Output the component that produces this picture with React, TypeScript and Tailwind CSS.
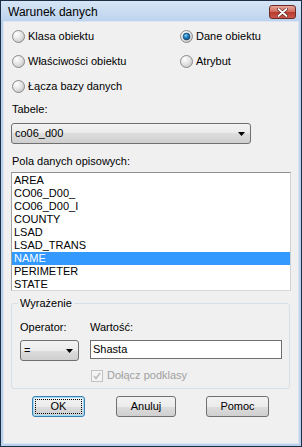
import React from 'react';

const btnFace = 'bg-[linear-gradient(#f3f3f3,#ebebeb_50%,#dddddd_50%,#cfcfcf)]';

const Radio = ({ checked }: { checked?: boolean }) => (
  <svg width="13" height="13" viewBox="0 0 13 13" className="shrink-0">
    <defs>
      <radialGradient id="radioFace" cx="35%" cy="30%" r="75%">
        <stop offset="0" stopColor="#ffffff" />
        <stop offset="0.6" stopColor="#e2e2e2" />
        <stop offset="1" stopColor="#c4c4c4" />
      </radialGradient>
      <radialGradient id="radioDot" cx="40%" cy="35%" r="70%">
        <stop offset="0" stopColor="#7fd0f6" />
        <stop offset="0.5" stopColor="#1e7ec0" />
        <stop offset="1" stopColor="#0d3f6e" />
      </radialGradient>
    </defs>
    <circle cx="6.5" cy="6.5" r="6" fill="url(#radioFace)" stroke="#8c8c8c" />
    {checked && <circle cx="6.5" cy="6.5" r="3.4" fill="url(#radioDot)" stroke="#1b4b78" strokeWidth="0.8" />}
  </svg>
);

const Arrow = () => (
  <svg width="7" height="4" viewBox="0 0 7 4">
    <path d="M0 0h7L3.5 4z" fill="#000" />
  </svg>
);

const RadioRow = ({ label, checked }: { label: string; checked?: boolean }) => (
  <div className="h-[25px] flex items-center gap-[3px]">
    <Radio checked={checked} />
    <span>{label}</span>
  </div>
);

const fields = ['AREA', 'CO06_D00_', 'CO06_D00_I', 'COUNTY', 'LSAD', 'LSAD_TRANS', 'NAME', 'PERIMETER', 'STATE'];

export default function App() {
  return (
    <div className="w-[302px] h-[447px] border border-[#1d2f47] bg-[#b9d1ec] flex flex-col text-[11px] leading-[13px] text-black font-['Liberation_Sans',Arial,sans-serif]">
      {/* Title bar */}
      <div className="h-[20px] flex items-center pl-[7px] pr-[5px] bg-gradient-to-b from-[#d6e5f6] to-[#bdd3ed]">
        <span className="text-[12px] leading-[14px] pt-[1px]">Warunek danych</span>
        <div className="ml-auto mt-[2px] w-[27px] h-[14px] rounded-[3px] border border-[#6b2a27] bg-[linear-gradient(#e8a89c,#d0675a_50%,#b8392d_50%,#c9574a)] flex items-center justify-center">
          <svg width="11" height="9" viewBox="0 0 11 9">
            <path d="M1.5 1l8 7M9.5 1l-8 7" stroke="#5a2420" strokeWidth="3.2" strokeLinecap="round" />
            <path d="M1.5 1l8 7M9.5 1l-8 7" stroke="#ffffff" strokeWidth="1.8" strokeLinecap="round" />
          </svg>
        </div>
      </div>

      {/* Client area */}
      <div className="mx-[2px] h-[423px] border border-[#dbe6f2] bg-[#f0f0f0] flex flex-col pt-[2px]">
        <div className="flex">
          <div className="w-[176px] pl-[8px]">
            <RadioRow label="Klasa obiektu" />
            <RadioRow label="Właściwości obiektu" />
            <RadioRow label="Łącza bazy danych" />
          </div>
          <div>
            <RadioRow label="Dane obiektu" checked />
            <RadioRow label="Atrybut" />
          </div>
        </div>

        <div className="pl-[8px] mt-[4px]">Tabele:</div>
        <div className={`ml-[7px] mt-[7px] w-[240px] h-[21px] rounded-[3px] border border-[#707070] ${btnFace} flex items-center pl-[3px] pr-[5px]`}>
          <span>co06_d00</span>
          <span className="ml-auto flex"><Arrow /></span>
        </div>

        <div className="pl-[8px] mt-[11px]">Pola danych opisowych:</div>
        <div className="ml-[7px] mt-[4px] w-[280px] h-[119px] bg-white border border-t-[#8e8f8f] border-l-[#a3a3a3] border-r-[#cdd1d6] border-b-[#d5d9de] pt-[1px]">
          {fields.map((f) => (
            <div key={f} className={`h-[13px] pl-[2px] ${f === 'NAME' ? 'bg-[#3399ff] text-white' : ''}`}>
              {f}
            </div>
          ))}
        </div>

        {/* Group box */}
        <div className="relative ml-[7px] mt-[12px] w-[279px] h-[86px] border border-[#d5dfe5] rounded-[3px] pt-[17px] pl-[8px]">
          <span className="absolute left-[6px] top-[-7px] px-[2px] bg-[#f0f0f0]">Wyrażenie</span>
          <div className="flex">
            <div className="w-[70px]">
              <div>Operator:</div>
              <div className={`mt-[6px] w-[59px] h-[21px] rounded-[3px] border border-[#707070] ${btnFace} flex items-center pl-[3px] pr-[5px]`}>
                <span>=</span>
                <span className="ml-auto flex"><Arrow /></span>
              </div>
            </div>
            <div>
              <div>Wartość:</div>
              <div className="mt-[6px] w-[192px] h-[19px] bg-white border border-[#6f6f6f] flex items-center pl-[2px]">
                Shasta
              </div>
              <div className="mt-[10px] flex items-center gap-[4px]">
                <div className="w-[12px] h-[12px] border border-[#c2c2c2] bg-[#f4f4f4] flex items-center justify-center ml-[1px]">
                  <svg width="8" height="8" viewBox="0 0 8 8">
                    <path d="M1 4l2 2.5L7 1" stroke="#b8b8b8" strokeWidth="1.4" fill="none" />
                  </svg>
                </div>
                <span className="text-[#a0a0a0]">Dołącz podklasy</span>
              </div>
            </div>
          </div>
        </div>

        {/* Buttons */}
        <div className="flex mt-[7px]">
          <div className={`ml-[28px] w-[53px] h-[21px] rounded-[3px] border border-[#3c7fb1] shadow-[inset_0_0_0_1px_#9fdcfa] ${btnFace} p-[2px]`}>
            <div className="h-full border border-dotted border-black flex items-center justify-center">OK</div>
          </div>
          <div className={`ml-[31px] w-[60px] h-[21px] rounded-[3px] border border-[#707070] ${btnFace} flex items-center justify-center`}>
            Anuluj
          </div>
          <div className={`ml-[30px] w-[63px] h-[21px] rounded-[3px] border border-[#707070] ${btnFace} flex items-center justify-center`}>
            Pomoc
          </div>
        </div>
      </div>
    </div>
  );
}
